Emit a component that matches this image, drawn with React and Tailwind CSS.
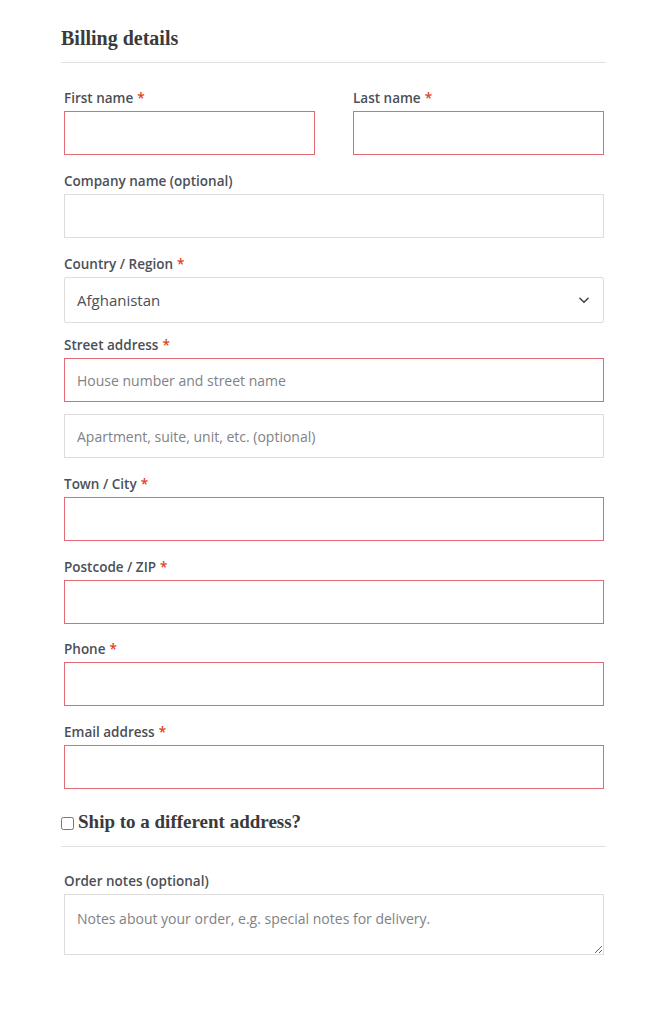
/**
 * Billing details checkout form
 */

const Label = ({ children, required }) => (
  <label className="block h-[20px] leading-[20px] mb-[3px] text-[13.5px] font-semibold text-[#4b4f58]">
    {children}
    {required && <span className="text-[#e2401c] ml-[4px]">*</span>}
  </label>
);

const Input = ({ invalid, placeholder }) => (
  <input
    type="text"
    placeholder={placeholder}
    className={`block w-full h-[44px] px-[12px] bg-white border text-[14px] text-[#666] placeholder:text-[#808285] outline-none ${
      invalid ? 'border-[#e26a76]' : 'border-[#dddddd]'
    }`}
  />
);

const Field = ({ label, required, invalid, placeholder, tight, className = '' }) => (
  <div className={`${tight ? 'mb-[15px]' : 'mb-[16px]'} ${className}`}>
    <Label required={required}>{label}</Label>
    <Input invalid={invalid} placeholder={placeholder} />
  </div>
);

export default function App() {
  const serif = { fontFamily: '"Liberation Serif", "DejaVu Serif", serif' };

  return (
    <div
      className="min-h-[1024px] bg-white pt-[24px] pl-[61px] pr-[49px]"
      style={{ fontFamily: '"Open Sans", "Liberation Sans", sans-serif' }}
    >
      {/* Heading */}
      <h3 className="text-[20px] leading-[28px] font-bold text-[#3a3a3a] pb-[10px] border-b border-[#e1e1e1]" style={serif}>
        Billing details
      </h3>

      <div className="pl-[3px] pr-[2px] pt-[25px]">
        <div className="flex gap-[38px]">
          <Field className="flex-1" label="First name" required invalid />
          <Field className="flex-1" label="Last name" required invalid />
        </div>

        <Field label="Company name (optional)" />

        {/* Country select */}
        <div className="mb-[12px]">
          <Label required>Country / Region</Label>
          <div className="flex items-center justify-between h-[46px] px-[12px] border border-[#dddddd] rounded-[2px] text-[15px] text-[#4b4f58]">
            <span>Afghanistan</span>
            <svg width="14" height="14" viewBox="0 0 24 24" fill="none" stroke="#444" strokeWidth="2.6" strokeLinecap="round" strokeLinejoin="round">
              <path d="M5 9l7 7 7-7" />
            </svg>
          </div>
        </div>

        {/* Street address */}
        <div className="mb-[16px]">
          <Label required>Street address</Label>
          <Input invalid placeholder="House number and street name" />
          <div className="h-[12px]" />
          <Input placeholder="Apartment, suite, unit, etc. (optional)" />
        </div>

        <Field label="Town / City" required invalid />
        <Field label="Postcode / ZIP" required invalid tight />
        <Field label="Phone" required invalid />
        <Field label="Email address" required invalid />
      </div>

      {/* Ship to different address */}
      <div className="mt-[19px] pb-[10px] border-b border-[#e1e1e1] flex items-center">
        <input type="checkbox" className="w-[13px] h-[13px] mr-[4px] mt-[2px]" />
        <span className="text-[19px] leading-[28px] font-bold text-[#3a3a3a]" style={serif}>
          Ship to a different address?
        </span>
      </div>

      {/* Order notes */}
      <div className="pl-[3px] pr-[2px] pt-[24px]">
        <Label>Order notes (optional)</Label>
        <textarea
          placeholder="Notes about your order, e.g. special notes for delivery."
          className="block w-full h-[61px] mt-[2px] px-[12px] py-[13px] border border-[#dddddd] text-[14px] placeholder:text-[#808285] outline-none"
        />
      </div>
    </div>
  );
}
